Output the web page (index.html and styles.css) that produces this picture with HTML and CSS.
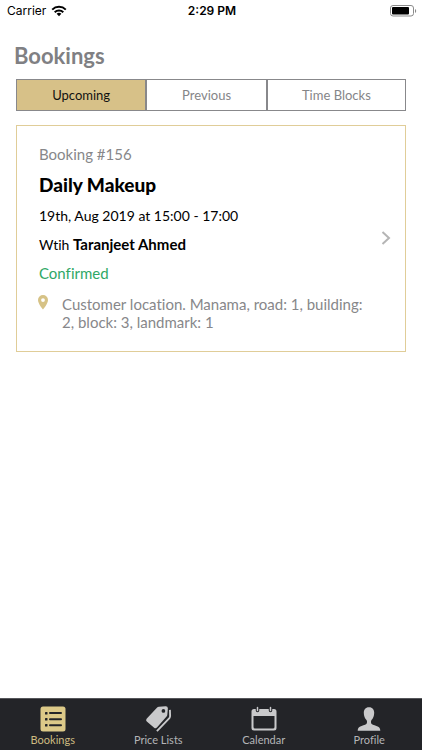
FILE: index.html
```html
<!DOCTYPE html>
<html lang="en">
<head>
<meta charset="utf-8">
<meta name="viewport" content="width=device-width, initial-scale=1">
<title>Bookings</title>
<link rel="stylesheet" href="styles.css">
</head>
<body>
<div class="status">
  <div class="carrier">Carrier
    <svg width="16" height="12" viewBox="0 0 16 12" aria-hidden="true"><g fill="none" stroke="#000" stroke-width="2"><path d="M1.2 4.6a9.8 9.8 0 0 1 13.6 0"/><path d="M3.7 7.2a6.2 6.2 0 0 1 8.6 0"/></g><path d="M8 11.2 5.6 8.8a3.5 3.5 0 0 1 4.8 0z"/></svg>
  </div>
  <div class="time">2:29 PM</div>
  <div class="battery">
    <svg width="27" height="12" viewBox="0 0 27 12" aria-hidden="true"><rect x=".5" y=".5" width="23" height="10.5" rx="2.5" fill="none" stroke="#8b8b8b"/><rect x="2" y="2" width="17" height="7.5" rx="1"/><path d="M25 4v4c1.600-.6 1.600-3.400 0-4z" fill="#8b8b8b"/></svg>
  </div>
</div>
<main>
  <h1>Bookings</h1>
  <div class="tabs">
    <button class="tab upcoming" type="button" aria-pressed="true">Upcoming</button>
    <button class="tab previous" type="button">Previous</button>
    <button class="tab blocks" type="button">Time Blocks</button>
  </div>
  <a class="card" href="#booking">
    <div class="details">
      <p class="muted">Booking #156</p>
      <h2>Daily Makeup</h2>
      <p class="line">19th, Aug 2019 at 15:00 - 17:00</p>
      <p class="line">Wtih <strong>Taranjeet Ahmed</strong></p>
      <p class="line confirmed">Confirmed</p>
      <div class="location">
        <svg width="10" height="15" viewBox="0 0 10 15" aria-hidden="true"><path fill="#d6c286" fill-rule="evenodd" d="M5 0a5 5 0 0 0-5 5c0 3.700 5 9.500 5 9.500S10 8.700 10 5a5 5 0 0 0-5-5zm0 3.200a1.900 1.900 0 1 1 0 3.800 1.900 1.900 0 0 1 0-3.800z"/></svg>
        <p>Customer location. Manama, road: 1, building: 2, block: 3, landmark: 1</p>
      </div>
    </div>
    <svg class="chevron" width="10" height="14" viewBox="0 0 10 14" aria-hidden="true"><path d="m1.500 1 6.500 6-6.500 6" fill="none" stroke="#b5b5b5" stroke-width="2"/></svg>
  </a>
</main>
<nav>
  <a class="active" href="#bookings">
    <svg width="26" height="26" viewBox="0 0 26 26" aria-hidden="true"><rect x=".5" y=".5" width="25" height="25" rx="2.500" fill="#dcc988"/><g fill="#232428"><rect x="5" y="6" width="2.500" height="2.500" rx=".6"/><rect x="9" y="6" width="13" height="2" rx="1"/><rect x="5" y="12" width="2.500" height="2.500" rx=".6"/><rect x="9" y="12.300" width="13" height="2" rx="1"/><rect x="5" y="18" width="2.500" height="2.500" rx=".6"/><rect x="9" y="18.300" width="13" height="2" rx="1"/></g></svg>
    <span>Bookings</span>
  </a>
  <a href="#prices">
    <svg class="tags" width="28" height="28" viewBox="0 0 28 28" aria-hidden="true"><path fill="#c9c9cb" fill-rule="evenodd" d="M14.500.9 21.500.2q2.500-.2 2.600 2.300L23.500 9.500q-.1 1-.8 1.900L12.300 23.100q-1.500 1.600-3 .2L1.400 16.600q-1.500-1.400-.2-3L12.300 2q.9-1 2.200-1.100zM19.300 3.300a2 2 0 1 0 0 4 2 2 0 0 0 0-4z"/><path d="m26.300 4.200.2 6.600q0 1.200-.8 2.200L12.300 27" fill="none" stroke="#c9c9cb" stroke-width="2"/></svg>
    <span>Price Lists</span>
  </a>
  <a href="#calendar">
    <svg width="26" height="26" viewBox="0 0 26 26" aria-hidden="true"><path fill="#c9c9cb" fill-rule="evenodd" d="M3 3h20q2.500 0 2.500 2.500V22q0 2.500-2.500 2.500H3Q.5 24.500.5 22V5.500Q.5 3 3 3zM2.500 10v11q0 1.500 1.500 1.500h18q1.500 0 1.500-1.500V10z"/><g stroke="#232428" stroke-width="3.500" stroke-linecap="round"><path d="M6.500 2v2.500M19.500 2v2.500"/></g><g stroke="#c9c9cb" stroke-width="1.500" stroke-linecap="round"><path d="M6.500 1.500v3M19.500 1.500v3"/></g></svg>
    <span>Calendar</span>
  </a>
  <a href="#profile">
    <svg width="26" height="26" viewBox="0 0 26 26" aria-hidden="true"><path fill="#c9c9cb" d="M13 1.200c3.700 0 5.200 2.500 5.200 5.600 0 3.300-1.100 5.700-2.700 7.200-.8 1-.7 3.300.2 4 1.200 1 4.300 1.500 6.500 2.700 1.700.9 2 2.200 2.100 4H1.700c.1-1.800.4-3.100 2.100-4C6 19.500 9.100 19 10.300 18c.9-.7 1-3 .2-4-1.600-1.500-2.700-3.900-2.700-7.200 0-3.100 1.500-5.600 5.200-5.600z"/></svg>
    <span>Profile</span>
  </a>
</nav>
</body>
</html>
```

FILE: styles.css
```css
* {
  box-sizing: border-box;
}

body {
  margin: 0;
  min-height: 100vh;
  display: flex;
  flex-direction: column;
  background: #fff;
  color: #000;
  font-family: Lato, "Liberation Sans", sans-serif;
  font-variant-ligatures: none;
}

h1, h2, p {
  margin: 0;
}

a {
  color: inherit;
  text-decoration: none;
}

svg {
  display: block;
  flex: none;
}

.status {
  display: grid;
  grid-template-columns: 1fr auto 1fr;
  align-items: center;
  height: 22px;
  padding: 0 5px 0 7px;
  font: 12px/16px Inter, sans-serif;
}

.carrier {
  display: flex;
  align-items: center;
  gap: 5px;
}

.time {
  font-weight: 600;
}

.battery {
  display: flex;
  justify-content: flex-end;
}

main {
  flex: 1;
  padding: 20px 16px 20px 14px;
}

h1 {
  color: #808083;
  font-size: 22px;
  line-height: 28px;
}

.tabs {
  display: flex;
  margin: 9px 0 0 2px;
  border: 1px solid #88888b;
}

.tab {
  height: 30px;
  padding: 0;
  border: 0;
  background: #fff;
  color: #858588;
  font: 13px/16px Lato, sans-serif;
}

.tab + .tab {
  border-left: 2px solid #88888b;
}

.upcoming {
  flex: 130;
  background: #d7c188;
  color: #111;
}

.previous {
  flex: 120;
}

.blocks {
  flex: 139;
}

.card {
  display: flex;
  align-items: center;
  justify-content: space-between;
  margin: 14px 0 0 2px;
  padding: 18px 14px 20px 22px;
  border: 1px solid #e0cd98;
}

.details {
  display: flex;
  flex-direction: column;
  font-size: 15px;
  line-height: 20px;
}

.muted {
  color: #87878a;
}

h2 {
  margin: 9px 0;
  font-size: 19px;
  font-weight: 900;
  line-height: 24px;
}

.line {
  font-size: 14px;
}

.line + .line {
  margin-top: 8px;
}

.line strong {
  font-size: 15px;
}

.line.confirmed {
  color: #2fa866;
  font-size: 15px;
}

.location {
  display: flex;
  gap: 14px;
  margin-top: 12px;
  margin-left: -1px;
  max-width: 330px;
  color: #87878a;
  line-height: 18px;
}

nav {
  display: grid;
  grid-template-columns: repeat(4, 1fr);
  height: 52px;
  padding-top: 7px;
  background: #232428;
  border-top: 1px solid #55565a;
  color: #b4b4b7;
}

nav a {
  display: flex;
  flex-direction: column;
  align-items: center;
  font-size: 11px;
  line-height: 14px;
}

nav svg {
  width: 26px;
  height: 26px;
  margin-bottom: 1px;
}

nav .tags {
  width: 27px;
}

nav .active {
  color: #cdbb80;
}
```
